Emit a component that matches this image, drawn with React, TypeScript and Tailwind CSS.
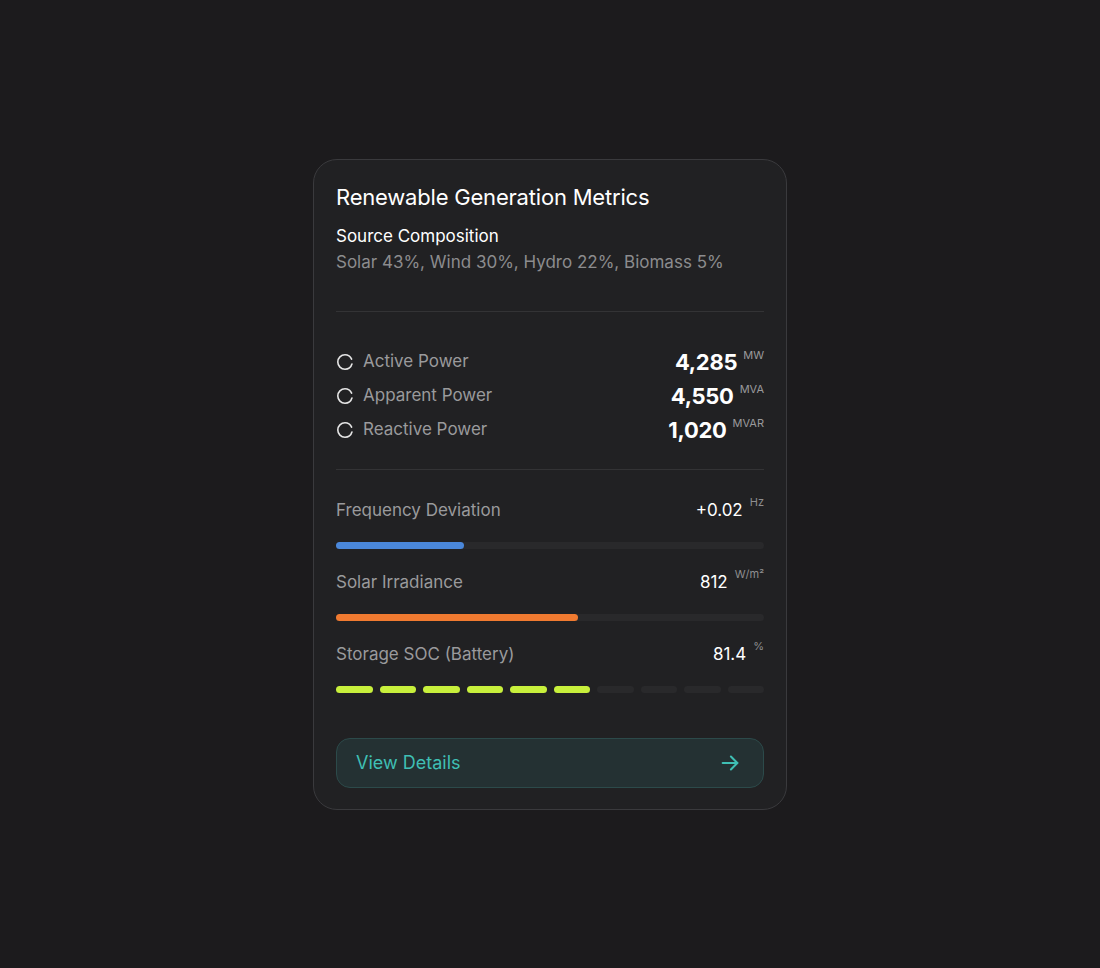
import React from "react";

function RingIcon() {
  return (
    <svg width="18" height="18" viewBox="0 0 18 18" fill="none" className="shrink-0">
      <circle
        cx="9"
        cy="9"
        r="7.2"
        stroke="#e5e5e5"
        strokeWidth="1.6"
        strokeDasharray="40 5.2"
        strokeDashoffset="-2"
        strokeLinecap="round"
      />
    </svg>
  );
}

function PowerRow({ label, value, unit }: { label: string; value: string; unit: string }) {
  return (
    <div className="flex h-[30px] items-center justify-between">
      <div className="flex items-center gap-[9px]">
        <RingIcon />
        <span className="text-[17px] text-[#9a9a9c]">{label}</span>
      </div>
      <div className="flex items-start">
        <span className="text-[22px] font-bold leading-[30px] tracking-[-0.3px] text-white">{value}</span>
        <span className="ml-[6px] mt-[1px] text-[11px] leading-[14px] text-[#9a9a9c]">{unit}</span>
      </div>
    </div>
  );
}

function MetricHeader({ label, value, unit }: { label: string; value: string; unit: string }) {
  return (
    <div className="flex h-[24px] items-center justify-between">
      <span className="text-[17px] leading-[24px] text-[#9a9a9c]">{label}</span>
      <div className="flex items-start">
        <span className="text-[17px] leading-[24px] text-white">{value}</span>
        <span className="ml-[7px] mt-[-3px] text-[11px] leading-[14px] text-[#8e8e90]">{unit}</span>
      </div>
    </div>
  );
}

export default function App() {
  const segments = Array.from({ length: 10 }, (_, i) => i < 6);
  return (
    <div
      className="flex min-h-[968px] w-full items-center justify-center bg-[#1c1b1d]"
      style={{ fontFamily: "Inter, 'Noto Sans', sans-serif" }}
    >
      <div className="w-[474px] rounded-[24px] border border-[#3a3a3d] bg-[#212123] px-[22px] pb-[21px] pt-[22px]">
        <h1 className="text-[22px] leading-[30px] tracking-[-0.2px] text-white">Renewable Generation Metrics</h1>
        <div className="mt-[12px] text-[17px] leading-[24px] text-white">Source Composition</div>
        <div className="mt-[2px] text-[17px] leading-[24px] text-[#8c8c8e]">
          Solar 43%, Wind 30%, Hydro 22%, Biomass 5%
        </div>
        <div className="mt-[37px] h-px bg-[#333335]" />

        <div className="flex flex-col gap-[4px] pt-[35px]">
          <PowerRow label="Active Power" value="4,285" unit="MW" />
          <PowerRow label="Apparent Power" value="4,550" unit="MVA" />
          <PowerRow label="Reactive Power" value="1,020" unit="MVAR" />
        </div>

        <div className="mt-[24px] h-px bg-[#333335]" />

        <div className="pt-[28px]">
          <MetricHeader label="Frequency Deviation" value="+0.02" unit="Hz" />
          <div className="mt-[20px] h-[7px] rounded-full bg-[#29292b]">
            <div className="h-full w-[30%] rounded-full bg-[#4a87da]" />
          </div>
        </div>

        <div className="pt-[21px]">
          <MetricHeader label="Solar Irradiance" value="812" unit="W/m²" />
          <div className="mt-[20px] h-[7px] rounded-full bg-[#29292b]">
            <div className="h-full w-[56.5%] rounded-full bg-[#f07a30]" />
          </div>
        </div>

        <div className="pt-[21px]">
          <MetricHeader label="Storage SOC (Battery)" value="81.4" unit="%" />
          <div className="mt-[20px] flex h-[7px] gap-[7px]">
            {segments.map((on, i) => (
              <div
                key={i}
                className={on ? "h-full flex-1 rounded-full bg-[#c8f03c]" : "h-full flex-1 rounded-full bg-[#29292b]"}
              />
            ))}
          </div>
        </div>

        <button className="mt-[45px] flex h-[50px] w-full items-center justify-between rounded-[14px] border border-[#2c4a4a] bg-[#243133] pl-[19px] pr-[22px]">
          <span className="text-[18px] text-[#3fbfb4]">View Details</span>
          <svg width="22" height="22" viewBox="0 0 24 24" fill="none" stroke="#3fbfb4" strokeWidth="2.2" strokeLinecap="round" strokeLinejoin="round">
            <path d="M4 12h16" />
            <path d="M13 5l7 7-7 7" />
          </svg>
        </button>
      </div>
    </div>
  );
}
